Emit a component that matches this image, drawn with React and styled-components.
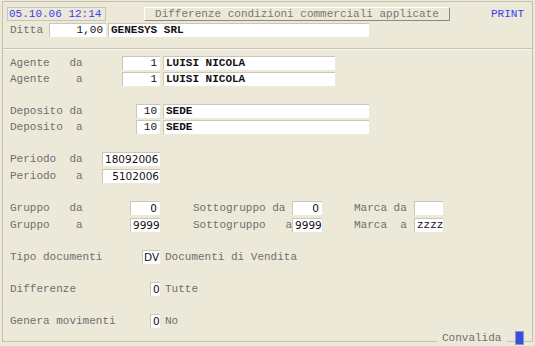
import React from 'react'
import styled, { createGlobalStyle } from 'styled-components'

const GlobalStyle = createGlobalStyle`
    html, body {
        margin: 0;
        padding: 0;
        background: #ECE9D8;
    }
    * {
        box-sizing: border-box;
    }
`

const Screen = styled.div`
    width: 535px;
    height: 346px;
    padding: 1px 0 0 2px;
    background: #ECE9D8;
    font-family: "Liberation Mono", "Courier New", monospace;
    font-size: 11px;
    color: #6f6f6f;
    overflow: hidden;
`

const Frame = styled.div`
    position: relative;
    width: 531px;
    height: 341px;
    border: 1px solid #c4c1b3;
    display: flex;
    flex-direction: column;
`

const Header = styled.div`
    height: 46px;
    padding: 5px 0 0 4px;
    display: flex;
    flex-direction: column;
    gap: 2px;
`

const TopBar = styled.div`
    display: flex;
    align-items: center;
    height: 14px;
`

const Clock = styled.div`
    width: 99px;
    height: 14px;
    border: 1px solid #c9c6b8;
    padding-left: 1px;
    line-height: 12px;
    color: #3c3cf0;
    white-space: pre;
`

const TitleButton = styled.div`
    width: 306px;
    height: 14px;
    margin-left: 38px;
    border-top: 1px solid #ffffff;
    border-left: 1px solid #ffffff;
    border-right: 1px solid #8a8a80;
    border-bottom: 1px solid #8a8a80;
    line-height: 12px;
    text-align: center;
    color: #777;
    white-space: pre;
`

const PrintLink = styled.div`
    margin-left: 41px;
    color: #3c3cf0;
    line-height: 14px;
`

const Body = styled.div`
    flex: 1;
    border-top: 1px solid #c4c1b3;
    box-shadow: inset 0 1px 0 #f8f7f0;
    padding: 7px 0 0 7px;
    display: flex;
    flex-direction: column;
    gap: 18px;
`

const Group = styled.div`
    display: flex;
    flex-direction: column;
    gap: ${props => props.$gap || 2}px;
`

const Row = styled.div`
    display: flex;
    align-items: center;
    height: 14px;
`

const HeaderRow = styled(Row)`
    padding-left: 3px;
`

const Block = styled.div`
    width: ${props => props.$w}px;
    margin-left: ${props => props.$ml || 0}px;
    display: flex;
    align-items: center;
    justify-content: space-between;
    height: 14px;
`

const Label = styled.span`
    white-space: pre;
    line-height: 14px;
    color: #6f6f6f;
`

const Field = styled.div`
    width: ${props => props.$w}px;
    height: 14px;
    margin-left: ${props => props.$ml || 0}px;
    background: #ffffff;
    border-top: 1px solid #cac7ba;
    border-left: 1px solid #cac7ba;
    padding: 0 ${props => props.$pad ?? 3}px 0 ${props => props.$lpad ?? 2}px;
    line-height: 13px;
    white-space: pre;
    overflow: hidden;
    text-align: ${props => props.$right ? 'right' : 'left'};
    color: #111;
    font-family: ${props => props.$sans ? '"DejaVu Sans", "Liberation Sans", sans-serif' : '"Liberation Mono", "Courier New", monospace'};
    font-size: ${props => props.$sans ? '10.5px' : '11px'};
    font-weight: ${props => props.$bold ? 700 : 400};
`

const Note = styled.span`
    margin-left: 5px;
    white-space: pre;
    line-height: 14px;
    color: #6f6f6f;
`

const Confirm = styled.div`
    position: absolute;
    left: 434px;
    top: 329px;
    height: 14px;
    display: flex;
    align-items: center;
`

const ConfirmLabel = styled.span`
    background: #ECE9D8;
    padding: 0 6px 0 5px;
    line-height: 14px;
    color: #6f6f6f;
`

const ConfirmKey = styled.span`
    width: 9px;
    height: 14px;
    margin-left: 8px;
    background: #3450e0;
    border: 1px solid #8c97c8;
`

const App = () => {
    return (
        <>
            <GlobalStyle />
            <Screen>
                <Frame>
                    <Header>
                        <TopBar>
                            <Clock>05.10.06 12:14</Clock>
                            <TitleButton>Differenze condizioni commerciali applicate</TitleButton>
                            <PrintLink>PRINT</PrintLink>
                        </TopBar>
                        <HeaderRow>
                            <Block $w={96}>
                                <Label>Ditta</Label>
                                <Field $w={57} $right>1,00</Field>
                            </Block>
                            <Field $w={261} $ml={2} $bold>GENESYS SRL</Field>
                        </HeaderRow>
                    </Header>

                    <Body>
                        <Group>
                            <Row>
                                <Block $w={150}>
                                    <Label>Agente   da</Label>
                                    <Field $w={38} $right>1</Field>
                                </Block>
                                <Field $w={172} $ml={3} $bold>LUISI NICOLA</Field>
                            </Row>
                            <Row>
                                <Block $w={150}>
                                    <Label>Agente    a</Label>
                                    <Field $w={38} $right>1</Field>
                                </Block>
                                <Field $w={172} $ml={3} $bold>LUISI NICOLA</Field>
                            </Row>
                        </Group>

                        <Group>
                            <Row>
                                <Block $w={150}>
                                    <Label>Deposito da</Label>
                                    <Field $w={24} $right>10</Field>
                                </Block>
                                <Field $w={206} $ml={3} $bold>SEDE</Field>
                            </Row>
                            <Row>
                                <Block $w={150}>
                                    <Label>Deposito  a</Label>
                                    <Field $w={24} $right>10</Field>
                                </Block>
                                <Field $w={206} $ml={3} $bold>SEDE</Field>
                            </Row>
                        </Group>

                        <Group $gap={3}>
                            <Row>
                                <Block $w={150}>
                                    <Label>Periodo  da</Label>
                                    <Field $w={58} $sans $pad={1}>18092006</Field>
                                </Block>
                            </Row>
                            <Row>
                                <Block $w={150}>
                                    <Label>Periodo   a</Label>
                                    <Field $w={58} $sans $right $pad={1}>5102006</Field>
                                </Block>
                            </Row>
                        </Group>

                        <Group $gap={3}>
                            <Row>
                                <Block $w={150}>
                                    <Label>Gruppo   da</Label>
                                    <Field $w={30} $sans $right>0</Field>
                                </Block>
                                <Block $w={129} $ml={33}>
                                    <Label>Sottogruppo da</Label>
                                    <Field $w={30} $sans $right>0</Field>
                                </Block>
                                <Block $w={89} $ml={32}>
                                    <Label>Marca da</Label>
                                    <Field $w={29} $sans $right></Field>
                                </Block>
                            </Row>
                            <Row>
                                <Block $w={150}>
                                    <Label>Gruppo    a</Label>
                                    <Field $w={30} $sans $right $pad={1}>9999</Field>
                                </Block>
                                <Block $w={129} $ml={33}>
                                    <Label>Sottogruppo   a</Label>
                                    <Field $w={30} $sans $right $pad={1}>9999</Field>
                                </Block>
                                <Block $w={89} $ml={32}>
                                    <Label>Marca  a</Label>
                                    <Field $w={29} $right $pad={1}>zzzz</Field>
                                </Block>
                            </Row>
                        </Group>

                        <Group>
                            <Row>
                                <Block $w={150}>
                                    <Label>Tipo documenti</Label>
                                    <Field $w={18} $sans $pad={0} $lpad={1}>DV</Field>
                                </Block>
                                <Note>Documenti di Vendita</Note>
                            </Row>
                        </Group>

                        <Group>
                            <Row>
                                <Block $w={150}>
                                    <Label>Differenze</Label>
                                    <Field $w={10} $sans $pad={1}>0</Field>
                                </Block>
                                <Note>Tutte</Note>
                            </Row>
                        </Group>

                        <Group>
                            <Row>
                                <Block $w={150}>
                                    <Label>Genera movimenti</Label>
                                    <Field $w={10} $sans $pad={1}>0</Field>
                                </Block>
                                <Note>No</Note>
                            </Row>
                        </Group>
                    </Body>

                    <Confirm>
                        <ConfirmLabel>Convalida</ConfirmLabel>
                        <ConfirmKey />
                    </Confirm>
                </Frame>
            </Screen>
        </>
    )
}

export default App
